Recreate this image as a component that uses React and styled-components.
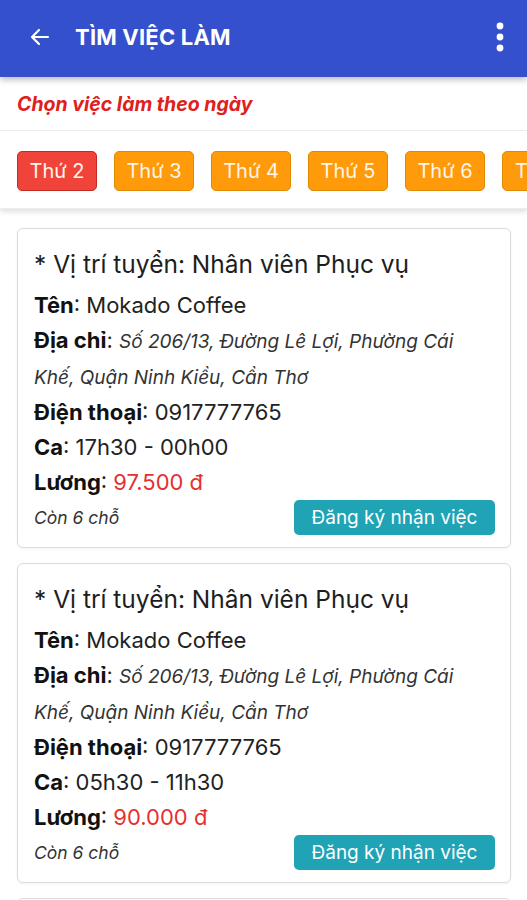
import React from "react";
import styled, { createGlobalStyle } from "styled-components";

const GlobalStyle = createGlobalStyle`
  body {
    margin: 0;
    background: #ffffff;
    font-family: Inter, "Noto Sans", sans-serif;
  }
  * { box-sizing: border-box; }
`;

const Page = styled.div`
  width: 527px;
  height: 900px;
  overflow: hidden;
  background: #fff;
`;

const Header = styled.header`
  height: 77px;
  background: #3550cd;
  display: flex;
  align-items: center;
  padding: 0 22px 3px 28px;
  box-shadow: 0 3px 6px rgba(0, 0, 0, 0.25);
  position: relative;
  z-index: 2;
  color: #fff;
`;

const Title = styled.h1`
  margin: 0 0 0 23px;
  font-size: 22px;
  font-weight: 700;
  letter-spacing: 0.2px;
  flex: 1;
`;

const IconButton = styled.span`
  display: flex;
  align-items: center;
`;

const Section = styled.div`
  background: #fff;
  padding: ${(p) => p.$pad};
  border-bottom: 1px solid #eeeeee;
  box-shadow: ${(p) => (p.$shadow ? "0 3px 5px rgba(0,0,0,0.12)" : "none")};
  position: relative;
  z-index: 1;
`;

const Hint = styled.p`
  margin: 0;
  color: #e0201b;
  font-weight: 700;
  font-style: italic;
  font-size: 19.5px;
  line-height: 24px;
`;

const Tabs = styled.div`
  display: flex;
  gap: 17px;
  overflow: hidden;
  white-space: nowrap;
`;

const Tab = styled.button`
  flex: 0 0 80px;
  height: 40px;
  border-radius: 5px;
  border: 1px solid ${(p) => (p.$active ? "#c62a22" : "#e08a00")};
  background: ${(p) => (p.$active ? "#f0443a" : "#ff9a0a")};
  color: #fff5ea;
  font-family: Inter, "Noto Sans", sans-serif;
  font-size: 20px;
  padding: 0;
`;

const List = styled.div`
  padding: 19px 16px 0 17px;
  display: flex;
  flex-direction: column;
  gap: 15px;
`;

const Card = styled.div`
  border: 1px solid #dcdcdc;
  border-radius: 6px;
  padding: 20px 15px 12px 16px;
  box-shadow: 0 1px 3px rgba(0, 0, 0, 0.06);
`;

const JobTitle = styled.div`
  font-size: 24.5px;
  line-height: 30px;
  color: #1e1e1e;
  margin-bottom: 9px;
`;

const Row = styled.div`
  font-size: 22px;
  color: #222;
  line-height: 35px;
`;

const Label = styled.b`
  font-weight: 700;
  color: #111;
`;

const Address = styled.span`
  font-style: italic;
  font-size: 19px;
  color: #333;
`;

const Price = styled.span`
  color: #e53030;
`;

const Footer = styled.div`
  display: flex;
  align-items: center;
  justify-content: space-between;
  margin-top: 0;
`;

const Slots = styled.span`
  font-style: italic;
  font-size: 17.5px;
  color: #333;
`;

const Apply = styled.button`
  background: #1fa3b5;
  color: #fff;
  border: none;
  border-radius: 5px;
  height: 35px;
  width: 201px;
  font-family: Inter, "Noto Sans", sans-serif;
  font-size: 19px;
  padding: 0;
`;

const days = ["Thứ 2", "Thứ 3", "Thứ 4", "Thứ 5", "Thứ 6", "Thứ 7", "CN"];

const jobs = [
  { shift: "17h30 - 00h00", salary: "97.500 đ" },
  { shift: "05h30 - 11h30", salary: "90.000 đ" },
  { shift: "12h00 - 17h00", salary: "75.000 đ" },
];

const JobCard = ({ job }) => (
  <Card>
    <JobTitle>* Vị trí tuyển: Nhân viên Phục vụ</JobTitle>
    <Row>
      <Label>Tên</Label>: Mokado Coffee
    </Row>
    <Row>
      <Label>Địa chỉ</Label>:{" "}
      <Address>Số 206/13, Đường Lê Lợi, Phường Cái Khế, Quận Ninh Kiều, Cần Thơ</Address>
    </Row>
    <Row>
      <Label>Điện thoại</Label>: 0917777765
    </Row>
    <Row>
      <Label>Ca</Label>: {job.shift}
    </Row>
    <Row>
      <Label>Lương</Label>: <Price>{job.salary}</Price>
    </Row>
    <Footer>
      <Slots>Còn 6 chỗ</Slots>
      <Apply>Đăng ký nhận việc</Apply>
    </Footer>
  </Card>
);

export default function App() {
  return (
    <Page>
      <GlobalStyle />
      <Header>
        <IconButton>
          <svg width="24" height="24" viewBox="0 0 24 24" fill="none" stroke="#fff" strokeWidth="2.2" strokeLinecap="round" strokeLinejoin="round">
            <path d="M20 12H4M11 5l-7 7 7 7" />
          </svg>
        </IconButton>
        <Title>TÌM VIỆC LÀM</Title>
        <IconButton>
          <svg width="10" height="32" viewBox="0 0 10 32" fill="#fff">
            <circle cx="5" cy="5" r="3.4" />
            <circle cx="5" cy="16" r="3.4" />
            <circle cx="5" cy="27" r="3.4" />
          </svg>
        </IconButton>
      </Header>
      <Section $pad="15px 17px 14px">
        <Hint>Chọn việc làm theo ngày</Hint>
      </Section>
      <Section $pad="20px 0 17px 17px" $shadow>
        <Tabs>
          {days.map((d, i) => (
            <Tab key={d} $active={i === 0}>
              {d}
            </Tab>
          ))}
        </Tabs>
      </Section>
      <List>
        {jobs.map((j, i) => (
          <JobCard key={i} job={j} />
        ))}
      </List>
    </Page>
  );
}
